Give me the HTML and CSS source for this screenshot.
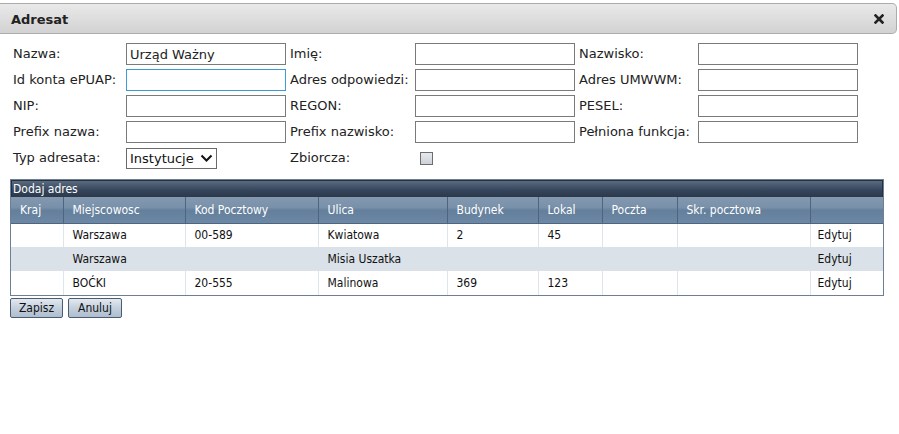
FILE: index.html
```html
<!DOCTYPE html>
<html lang="pl">
<head>
<meta charset="utf-8">
<title>Adresat</title>
<link rel="stylesheet" href="styles.css">
</head>
<body>
<div class="dialog">
  <div class="titlebar">
    <span class="title">Adresat</span>
    <span class="close"><svg width="10" height="10" viewBox="0 0 10 10"><path d="M1.5 1.5 L8.5 8.5 M8.5 1.5 L1.5 8.5" stroke="#222" stroke-width="2.6" stroke-linecap="square"/></svg></span>
  </div>
  <div class="form">
    <label>Nazwa:</label><input class="field" type="text" value="Urząd Ważny">
    <label>Imię:</label><input class="field" type="text">
    <label>Nazwisko:</label><input class="field" type="text">

    <label>Id konta ePUAP:</label><input class="field focus" type="text">
    <label>Adres odpowiedzi:</label><input class="field" type="text">
    <label>Adres UMWWM:</label><input class="field" type="text">

    <label>NIP:</label><input class="field" type="text">
    <label>REGON:</label><input class="field" type="text">
    <label>PESEL:</label><input class="field" type="text">

    <label>Prefix nazwa:</label><input class="field" type="text">
    <label>Prefix nazwisko:</label><input class="field" type="text">
    <label>Pełniona funkcja:</label><input class="field" type="text">

    <label>Typ adresata:</label>
    <div class="cell"><div class="select"><span>Instytucje</span><svg width="13" height="9" viewBox="0 0 13 9"><path d="M1.5 1.5 L6.5 6.5 L11.5 1.5" fill="none" stroke="#111" stroke-width="2"/></svg></div></div>
    <label>Zbiorcza:</label>
    <div class="cell"><span class="checkbox"></span></div>
  </div>

  <div class="grid">
    <div class="caption">Dodaj adres</div>
    <table>
      <colgroup>
        <col class="c-kraj"><col class="c-miej"><col class="c-kod"><col class="c-ulica"><col class="c-bud"><col class="c-lok"><col class="c-poczta"><col class="c-skr"><col class="c-edit">
      </colgroup>
      <thead>
        <tr><th>Kraj</th><th>Miejscowosc</th><th>Kod Pocztowy</th><th>Ulica</th><th>Budynek</th><th>Lokal</th><th>Poczta</th><th>Skr. pocztowa</th><th></th></tr>
      </thead>
      <tbody>
        <tr><td></td><td>Warszawa</td><td>00-589</td><td>Kwiatowa</td><td>2</td><td>45</td><td></td><td></td><td>Edytuj</td></tr>
        <tr class="alt"><td></td><td>Warszawa</td><td></td><td>Misia Uszatka</td><td></td><td></td><td></td><td></td><td>Edytuj</td></tr>
        <tr><td></td><td>BOĆKI</td><td>20-555</td><td>Malinowa</td><td>369</td><td>123</td><td></td><td></td><td>Edytuj</td></tr>
      </tbody>
    </table>
  </div>

  <div class="buttons">
    <button class="btn btn-save">Zapisz</button>
    <button class="btn btn-cancel">Anuluj</button>
  </div>
</div>
</body>
</html>
```

FILE: styles.css
```css
html, body {
  margin: 0;
  padding: 0;
  background: #fff;
}

body {
  font-family: "DejaVu Sans", Verdana, sans-serif;
  font-size: 13px;
  color: #222;
}

.dialog {
  width: 899px;
  padding-top: 3px;
}

.titlebar {
  width: 896px;
  height: 29px;
  box-sizing: content-box;
  border: 1px solid #acacac;
  border-left: none;
  border-radius: 0 5px 5px 0;
  background: linear-gradient(#e9e9e9, #d2d2d2);
  display: flex;
  align-items: center;
  justify-content: space-between;
}

.title {
  font-weight: bold;
  font-size: 13px;
  color: #222;
  padding-left: 11px;
  padding-top: 1px;
}

.close {
  display: flex;
  align-items: center;
  padding-right: 12px;
  padding-top: 1px;
}

.form {
  display: grid;
  grid-template-columns: 113px 164px 125px 164px 119px 160px;
  grid-auto-rows: 22px;
  row-gap: 4px;
  padding: 9px 0 0 13px;
  align-items: center;
}

.form label {
  color: #222;
  white-space: nowrap;
  line-height: 22px;
}

.field {
  width: 160px;
  height: 22px;
  box-sizing: border-box;
  border: 1px solid #7a7a7a;
  margin: 0;
  padding: 0 3px;
  font-family: "DejaVu Sans", Verdana, sans-serif;
  font-size: 13px;
  color: #222;
  background: #fff;
  outline: none;
}

.field.focus {
  border-color: #3d9bd6;
}

.cell {
  display: flex;
  align-items: center;
  height: 22px;
}

.select {
  width: 91px;
  height: 21px;
  box-sizing: border-box;
  border: 1px solid #6a6a6a;
  display: flex;
  align-items: center;
  justify-content: space-between;
  padding: 0 3px 0 3px;
  color: #111;
  background: #fff;
}

.checkbox {
  width: 11px;
  height: 11px;
  margin-left: 5px;
  margin-top: 1px;
  border: 1px solid #6d6d6d;
  background: linear-gradient(#e7e9ec, #cdd2d8);
}

.grid {
  margin: 10px 0 0 10px;
  width: 872px;
  border: 1px solid #6c7f95;
  font-family: "DejaVu Sans Condensed", "Liberation Sans", sans-serif;
  font-size: 12px;
}

.caption {
  height: 16px;
  line-height: 16px;
  padding-left: 1px;
  color: #fff;
  background: linear-gradient(#5a6b80, #34445a 60%, #2c394b);
  border: 1px solid #26313f;
  border-bottom: none;
}

table {
  width: 872px;
  table-layout: fixed;
  border-collapse: collapse;
}

.c-kraj { width: 52px; }
.c-miej { width: 122px; }
.c-kod { width: 133px; }
.c-ulica { width: 129px; }
.c-bud { width: 91px; }
.c-lok { width: 64px; }
.c-poczta { width: 75px; }
.c-skr { width: 133px; }
.c-edit { width: 73px; }

th {
  height: 26px;
  box-sizing: border-box;
  padding: 0 0 0 9px;
  text-align: left;
  font-weight: normal;
  color: #fff;
  background: linear-gradient(#8499b0 0%, #7890a9 40%, #647f9b 52%, #6c88a4 100%);
  border-left: 1px solid #4d6680;
  border-bottom: 1px solid #4d6580;
}

th:first-child {
  border-left: none;
}

td {
  height: 24px;
  box-sizing: border-box;
  padding: 0 0 0 9px;
  color: #111;
  background: #fff;
  border-left: 1px solid #dde4ec;
  white-space: nowrap;
  overflow: hidden;
}

td:first-child {
  border-left: none;
}

tr.alt td {
  background: #dae1e8;
  border-left-color: #dae1e8;
}

td:last-child {
  padding-left: 7px;
}

.buttons {
  display: flex;
  gap: 5px;
  margin: 2px 0 0 10px;
}

.btn {
  height: 20px;
  box-sizing: border-box;
  padding: 0;
  border: 1px solid #4a5c73;
  border-radius: 2px;
  background: linear-gradient(#e3e9f0, #c4d0dd 50%, #aebdcd 100%);
  color: #111;
  font-family: "DejaVu Sans Condensed", "Liberation Sans", sans-serif;
  font-size: 12px;
}

.btn-save { width: 53px; }
.btn-cancel { width: 54px; }
```
